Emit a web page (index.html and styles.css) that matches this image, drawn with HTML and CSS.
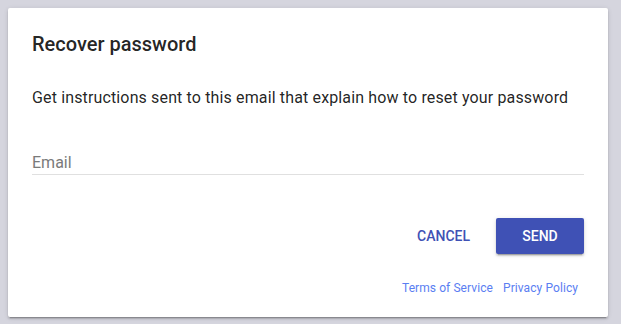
FILE: index.html
```html
<!DOCTYPE html>
<html>
<head>
<meta charset="utf-8">
<link rel="stylesheet" href="styles.css">
</head>
<body>
<div class="card">
  <h1 class="title">Recover password</h1>
  <p class="text">Get instructions sent to this email that explain how to reset your password</p>
  <div class="field">
    <label class="label" for="email">Email</label>
  </div>
  <div class="actions">
    <button class="btn btn-secondary">Cancel</button>
    <button class="btn btn-primary">Send</button>
  </div>
  <div class="footer">
    <a class="link" href="#">Terms of Service</a>
    <a class="link" href="#">Privacy Policy</a>
  </div>
</div>
</body>
</html>
```

FILE: styles.css
```css
html, body {
  margin: 0;
  padding: 0;
}
body {
  background: #d5d5de;
  font-family: Roboto, "Liberation Sans", sans-serif;
  padding: 8px 0 0 8px;
  height: 324px;
  box-sizing: border-box;
  overflow: hidden;
}
.card {
  width: 600px;
  box-sizing: border-box;
  background: #fff;
  border-radius: 2px;
  padding: 24px 24px 21px 24px;
  box-shadow: 0 2px 2px 0 rgba(0,0,0,.14), 0 3px 1px -2px rgba(0,0,0,.2), 0 1px 5px 0 rgba(0,0,0,.12);
}
.title {
  margin: 0;
  font-size: 20px;
  font-weight: 500;
  line-height: 24px;
  color: rgba(0,0,0,.87);
}
.text {
  margin: 32px 0 0;
  font-size: 16px;
  line-height: 20px;
  letter-spacing: 0.14px;
  color: rgba(0,0,0,.87);
}
.field {
  margin-top: 45px;
  border-bottom: 1px solid #e0e0e0;
  padding-bottom: 1px;
}
.label {
  display: block;
  font-size: 16px;
  line-height: 20px;
  color: #7a7a7a;
}
.actions {
  margin-top: 43px;
  display: flex;
  justify-content: flex-end;
  gap: 10px;
}
.btn {
  height: 36px;
  border: none;
  border-radius: 2px;
  font-family: Roboto, "Liberation Sans", sans-serif;
  font-size: 14px;
  font-weight: 500;
  text-transform: uppercase;
  cursor: pointer;
  padding: 0 16px;
}
.btn-secondary {
  background: transparent;
  color: #3f51b5;
}
.btn-primary {
  width: 88px;
  background: #3f51b5;
  color: #fff;
  box-shadow: 0 2px 2px 0 rgba(0,0,0,.14), 0 3px 1px -2px rgba(0,0,0,.2), 0 1px 5px 0 rgba(0,0,0,.12);
}
.footer {
  margin-top: 26px;
  display: flex;
  justify-content: flex-end;
  line-height: 16px;
  padding-right: 1px;
}
.link {
  font-size: 12px;
  letter-spacing: 0.08px;
  color: #5a7ef2;
  text-decoration: none;
  padding: 0 5px;
}
```
